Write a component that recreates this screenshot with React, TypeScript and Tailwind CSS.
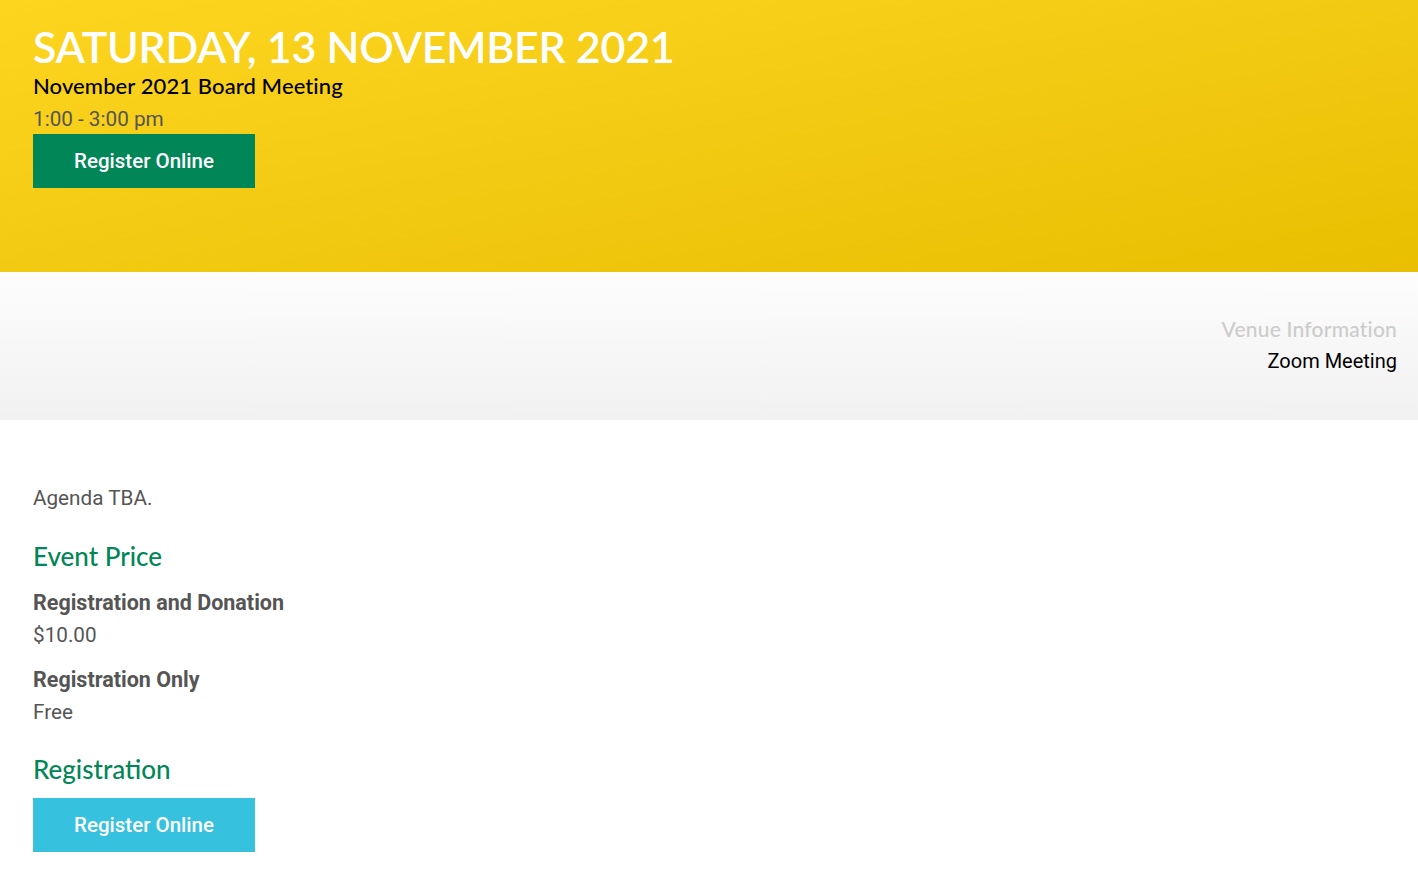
const heading = "font-['Lato','Open_Sans',sans-serif]";
const body = "font-['Roboto','Liberation_Sans',sans-serif]";

function PriceRow({ label, price }: { label: string; price: string }) {
  return (
    <div className="mb-[11px]">
      <div className="text-[21.5px] leading-[33px] font-bold text-[#555]">{label}</div>
      <div className="text-[20.7px] leading-[33px] text-[#555]">{price}</div>
    </div>
  );
}

export default function App() {
  return (
    <div className={`min-h-screen bg-white ${body}`}>
      <header className="h-[272px] bg-linear-to-br from-[#fdd51f] to-[#e9bf00] px-[33px] pt-[25px]">
        <h1 className={`${heading} text-[43px] leading-[44px] font-semibold text-white tracking-[-0.3px]`}>
          SATURDAY, 13 NOVEMBER 2021
        </h1>
        <div className={`${heading} mt-[4px] text-[22px] leading-[26px] font-medium text-black tracking-[0.1px]`}>
          November 2021 Board Meeting
        </div>
        <div className="mt-[6px] text-[20.7px] leading-[28px] text-[#555]">1:00 - 3:00 pm</div>
        <button className="mt-[1px] flex h-[54px] w-[222px] items-center justify-center bg-[#008657] text-[20.5px] font-medium text-white">
          Register Online
        </button>
      </header>

      <section className="flex h-[148px] flex-col items-end justify-center bg-linear-to-b from-[#fdfdfd] to-[#f1f1f1] px-[21px] pb-[3px]">
        <div className={`${heading} text-[21px] leading-[32px] font-medium text-[#cccccc] tracking-[0.2px]`}>Venue Information</div>
        <div className="text-[20px] leading-[32px] text-black">Zoom Meeting</div>
      </section>

      <main className="px-[33px] pt-[64px]">
        <p className="text-[20.7px] leading-[28px] text-[#555]">Agenda TBA.</p>
        <h2 className={`${heading} mt-[28px] mb-[14px] text-[26px] leading-[32px] font-medium text-[#008657]`}>Event Price</h2>
        <PriceRow label="Registration and Donation" price="$10.00" />
        <PriceRow label="Registration Only" price="Free" />
        <h2 className={`${heading} mt-[24px] mb-[13px] text-[26px] leading-[32px] font-medium text-[#008657]`}>Registration</h2>
        <button className="flex h-[54px] w-[222px] items-center justify-center bg-[#36c1df] text-[20.5px] font-medium text-white">
          Register Online
        </button>
      </main>
    </div>
  );
}
